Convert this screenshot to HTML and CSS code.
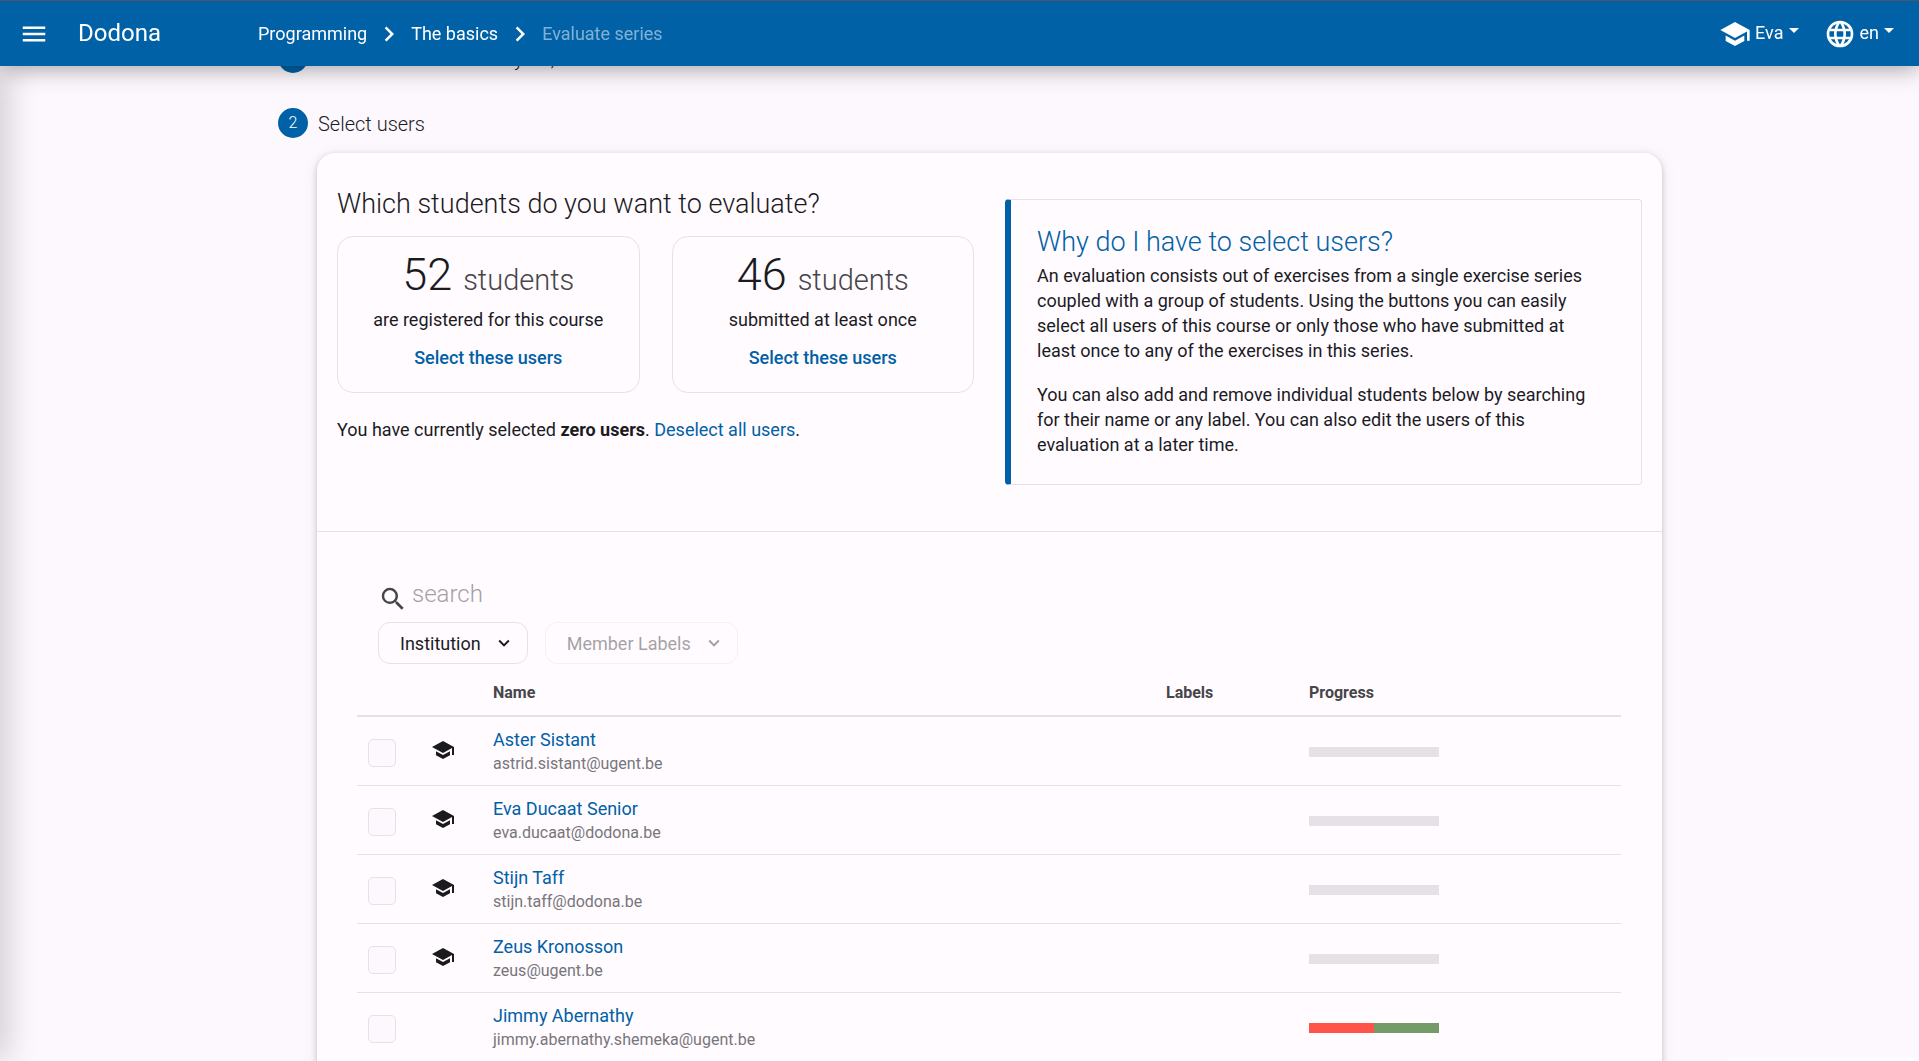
FILE: index.html
```
<!DOCTYPE html>
<html lang="en">
<head>
<meta charset="utf-8">
<title>Evaluate series - Dodona</title>
<link rel="stylesheet" href="styles.css">
</head>
<body>
<svg class="sprite" aria-hidden="true">
  <symbol id="school" viewBox="0 0 24 24"><path d="M12 3 1 9l11 6 9-4.91V17h2V9M5 13.18v4L12 21l7-3.82v-4L12 17z"/></symbol>
  <symbol id="chevron-right" viewBox="0 0 24 24"><path d="M8.59 16.58 13.17 12 8.59 7.41 10 6l6 6-6 6z"/></symbol>
  <symbol id="chevron-down" viewBox="0 0 24 24"><path d="M7.41 8.58 12 13.17l4.59-4.59L18 10l-6 6-6-6z"/></symbol>
</svg>
<header class="topbar">
  <button class="menu-button" aria-label="Menu"><svg viewBox="0 0 24 24"><path d="M3 6h18v2H3zm0 5h18v2H3zm0 5h18v2H3z"/></svg></button>
  <a class="brand" href="#">Dodona</a>
  <nav class="crumbs" aria-label="Breadcrumb">
    <a href="#">Programming</a>
    <svg><use href="#chevron-right"/></svg>
    <a href="#">The basics</a>
    <svg><use href="#chevron-right"/></svg>
    <span class="current">Evaluate series</span>
  </nav>
  <div class="account">
    <button class="drop"><svg><use href="#school"/></svg>Eva<i class="caret"></i></button>
    <button class="drop"><svg viewBox="0 0 24 24"><path d="M16.36 14c.08-.66.14-1.32.14-2s-.06-1.34-.14-2h3.38c.16.64.26 1.31.26 2s-.1 1.36-.26 2m-5.15 5.56c.6-1.11 1.06-2.31 1.38-3.56h2.95a8.03 8.03 0 0 1-4.33 3.56M14.34 14H9.66c-.1-.66-.16-1.32-.16-2s.06-1.35.16-2h4.68c.09.65.16 1.32.16 2s-.07 1.34-.16 2M12 19.96c-.83-1.2-1.5-2.53-1.91-3.96h3.82c-.41 1.43-1.08 2.76-1.91 3.96M8 8H5.08A7.92 7.92 0 0 1 9.4 4.44C8.8 5.55 8.35 6.75 8 8m-2.92 8H8c.35 1.25.8 2.45 1.4 3.56A8 8 0 0 1 5.08 16m-.82-2C4.1 13.36 4 12.69 4 12s.1-1.36.26-2h3.38c-.08.66-.14 1.32-.14 2s.06 1.34.14 2M12 4.03c.83 1.2 1.5 2.54 1.91 3.97h-3.82c.41-1.43 1.08-2.77 1.91-3.97M18.92 8h-2.95a15.7 15.7 0 0 0-1.38-3.56c1.84.63 3.37 1.9 4.33 3.56M12 2C6.47 2 2 6.5 2 12a10 10 0 1 0 10-10"/></svg>en<i class="caret"></i></button>
  </div>
</header>
<main class="page">
  <div class="step"><span class="num">1</span><span>Deadline set to January 28, 2021</span></div>
  <div class="step"><span class="num">2</span><span>Select users</span></div>
  <section class="card">
    <div class="intro">
      <div class="choose">
        <h2>Which students do you want to evaluate?</h2>
        <div class="counts">
          <div class="count"><p class="figure">52 <small>students</small></p><p>are registered for this course</p><button>Select these users</button></div>
          <div class="count"><p class="figure">46 <small>students</small></p><p>submitted at least once</p><button>Select these users</button></div>
        </div>
        <p>You have currently selected <b>zero users</b>. <a href="#">Deselect all users</a>.</p>
      </div>
      <aside class="callout">
        <h2>Why do I have to select users?</h2>
        <p>An evaluation consists out of exercises from a single exercise series coupled with a group of students. Using the buttons you can easily select all users of this course or only those who have submitted at least once to any of the exercises in this series.</p>
        <p>You can also add and remove individual students below by searching for their name or any label. You can also edit the users of this evaluation at a later time.</p>
      </aside>
    </div>
    <div class="members">
      <label class="search"><svg viewBox="0 0 24 24"><path d="M9.5 3A6.5 6.5 0 0 1 16 9.5c0 1.61-.59 3.09-1.56 4.23l.27.27h.79l5 5-1.5 1.5-5-5v-.79l-.27-.27A6.52 6.52 0 0 1 9.5 16a6.5 6.5 0 0 1 0-13m0 2C7 5 5 7 5 9.5S7 14 9.5 14 14 12 14 9.5 12 5 9.5 5"/></svg><input type="text" placeholder="search" aria-label="search"></label>
      <div class="filters">
        <button>Institution<svg><use href="#chevron-down"/></svg></button>
        <button disabled>Member Labels<svg><use href="#chevron-down"/></svg></button>
      </div>
      <table>
        <thead><tr><th class="c-check"></th><th class="c-role"></th><th>Name</th><th class="c-labels">Labels</th><th class="c-progress">Progress</th></tr></thead>
        <tbody>
          <tr><td><input type="checkbox" aria-label="Aster Sistant"></td><td><svg><use href="#school"/></svg></td><td><a href="#">Aster Sistant</a><small>astrid.sistant@ugent.be</small></td><td></td><td><div class="bar"></div></td></tr>
          <tr><td><input type="checkbox" aria-label="Eva Ducaat Senior"></td><td><svg><use href="#school"/></svg></td><td><a href="#">Eva Ducaat Senior</a><small>eva.ducaat@dodona.be</small></td><td></td><td><div class="bar"></div></td></tr>
          <tr><td><input type="checkbox" aria-label="Stijn Taff"></td><td><svg><use href="#school"/></svg></td><td><a href="#">Stijn Taff</a><small>stijn.taff@dodona.be</small></td><td></td><td><div class="bar"></div></td></tr>
          <tr><td><input type="checkbox" aria-label="Zeus Kronosson"></td><td><svg><use href="#school"/></svg></td><td><a href="#">Zeus Kronosson</a><small>zeus@ugent.be</small></td><td></td><td><div class="bar"></div></td></tr>
          <tr><td><input type="checkbox" aria-label="Jimmy Abernathy"></td><td></td><td><a href="#">Jimmy Abernathy</a><small>jimmy.abernathy.shemeka@ugent.be</small></td><td></td><td><div class="bar"><span class="wrong" style="width:50%"></span><span class="correct" style="width:50%"></span></div></td></tr>
        </tbody>
      </table>
    </div>
  </section>
</main>
<div class="edge" aria-hidden="true"></div>
<div class="toast" aria-hidden="true"></div>
</body>
</html>
```
FILE: styles.css
```
:root {
  --blue: #0061a6;
  --ink: #1b1b1f;
  --muted: #46464a;
  --line: #e5e1e6;
  --surface: #fffbff;
}
* { box-sizing: border-box; }
body {
  margin: 0;
  height: 100vh;
  overflow: hidden;
  background: #fcf8fe;
  color: var(--ink);
  font: 18px/25px Roboto, "Liberation Sans", sans-serif;
}
a { color: var(--blue); text-decoration: none; }
p, h2 { margin: 0; }
button, input { font: inherit; color: inherit; }
button { background: none; border: 0; padding: 0; }
svg { fill: currentColor; flex: none; }
.sprite { position: absolute; width: 0; height: 0; }

.topbar {
  position: fixed;
  inset: 0 0 auto;
  z-index: 2;
  height: 66px;
  display: flex;
  align-items: center;
  padding: 0 25px 0 19px;
  border-top: 1px solid #4d5462;
  background: var(--blue);
  color: #fff;
  box-shadow: 0 2px 24px rgba(0, 0, 0, .38);
}
.topbar a { color: #fff; }
.menu-button { display: flex; margin-right: 29px; }
.menu-button svg { width: 30px; height: 30px; }
.brand { width: 180px; font-size: 24px; }
.crumbs { display: flex; align-items: center; gap: 7px; }
.crumbs svg { width: 30px; height: 30px; }
.current { color: rgba(255, 255, 255, .5); }
.account { display: flex; gap: 25px; margin-left: auto; }
.drop { display: flex; align-items: center; line-height: 22px; padding-bottom: 2px; }
.drop svg { width: 32px; height: 32px; margin: 2px 4px 0 0; }
.caret {
  margin: -4px 0 0 5px;
  border: 5px solid transparent;
  border-top-color: currentColor;
  border-bottom: 0;
}

.page { padding: 39px 257px 0 278px; }
.step {
  display: flex;
  align-items: center;
  gap: 10px;
  height: 38px;
  margin-bottom: 27px;
  font-size: 20px;
  font-weight: 300;
  line-height: 28px;
}
.step span:last-child { padding-top: 2px; }
.num {
  width: 30px;
  border-radius: 50%;
  background: var(--blue);
  color: #fff;
  font-size: 16px;
  line-height: 30px;
  text-align: center;
}
.card {
  margin: -16px 0 0 39px;
  padding-bottom: 64px;
  border-radius: 18px;
  background: var(--surface);
  box-shadow: 0 2px 6px rgba(0, 0, 0, .2), 0 2px 18px rgba(0, 0, 0, .06);
}
.intro {
  display: grid;
  grid-template-columns: 1fr 1fr;
  gap: 31px;
  padding: 34px 20px 46px;
  border-bottom: 1px solid var(--line);
}
h2 { font-size: 27px; font-weight: 300; line-height: 34px; }
.counts {
  display: grid;
  grid-template-columns: 1fr 1fr;
  gap: 32px;
  margin: 15px 0 24px;
}
.count {
  display: flex;
  flex-direction: column;
  gap: 13px;
  height: 157px;
  padding-top: 24px;
  border: 1px solid var(--line);
  border-radius: 16px;
  text-align: center;
}
.figure { font-size: 45px; font-weight: 300; line-height: 28px; }
.figure small { font-size: 29px; color: var(--muted); }
.count button { color: var(--blue); font-weight: 500; }
.callout {
  margin-top: 12px;
  padding: 25px 40px 27px 26px;
  border: 1px solid var(--line);
  border-left: 6px solid var(--blue);
  border-radius: 4px;
}
.callout h2 { margin-bottom: 4px; color: var(--blue); }
.callout p { margin-bottom: 19px; }
.callout p:last-child { margin-bottom: 0; }

.members { padding: 42px 41px 0 40px; }
.search { display: flex; align-items: center; padding-left: 21px; }
.search svg { width: 30px; height: 30px; margin-top: 10px; color: var(--muted); }
.search input {
  flex: 1;
  height: 36px;
  padding: 0 4px;
  border: 0;
  outline: 0;
  background: none;
  font-size: 24px;
  font-weight: 300;
}
.search input::placeholder { color: #a3a1a6; opacity: 1; }
.filters { display: flex; gap: 17px; margin: 8px 0 10px 21px; }
.filters button {
  display: flex;
  align-items: center;
  gap: 12px;
  height: 42px;
  padding: 0 12px 0 21px;
  border: 1px solid var(--line);
  border-radius: 12px;
}
.filters svg { width: 22px; height: 22px; }
.filters button:disabled { opacity: .4; }

table { width: 100%; border-collapse: collapse; table-layout: fixed; }
th {
  height: 42px;
  padding: 0 0 5px;
  border-bottom: 2px solid var(--line);
  color: var(--muted);
  font-size: 16px;
  font-weight: 700;
  text-align: left;
}
td { height: 69px; padding: 0; border-bottom: 1px solid var(--line); }
td svg { display: block; width: 24px; height: 24px; margin-bottom: 2px; }
td small { display: block; color: #77767a; font-size: 16px; line-height: 23px; }
td a { display: block; }
.c-check { width: 74px; }
.c-role { width: 62px; }
.c-labels { width: 143px; }
.c-progress { width: 312px; }
td input {
  appearance: none;
  display: block;
  width: 28px;
  height: 28px;
  margin: 4px 0 0 11px;
  border: 1px solid var(--line);
  border-radius: 5px;
  background: #fcf8fe;
}
.bar { display: flex; width: 130px; height: 10px; margin-top: 3px; background: #e5e1e6; }
.wrong { background: #ff5449; }
.correct { background: #749b68; }

.edge {
  position: fixed;
  inset: 66px auto 0 -20px;
  width: 20px;
  box-shadow: 0 0 36px rgba(0, 0, 0, .32);
}
.toast {
  position: fixed;
  right: 0;
  bottom: 0;
  width: 192px;
  height: 3px;
  border-radius: 8px 0 0;
  background: #fff;
}
```
